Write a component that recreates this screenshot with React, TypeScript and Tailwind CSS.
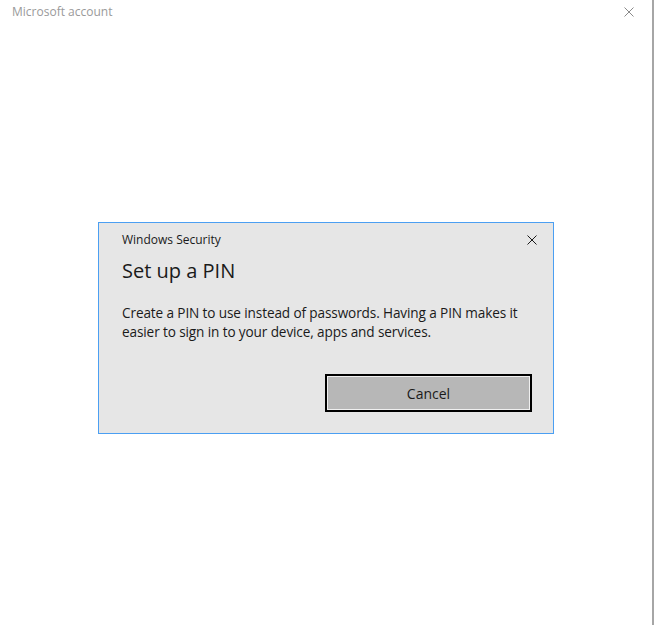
function CloseGlyph({ className }: { className: string }) {
  return (
    <svg viewBox="0 0 10 10" className={className} fill="none" stroke="currentColor" strokeWidth="1">
      <path d="M0.5 0.5 L9.5 9.5 M9.5 0.5 L0.5 9.5" />
    </svg>
  );
}

export default function App() {
  return (
    <div className="w-[654px] h-[625px] bg-white flex flex-col border-r-2 border-[#a6a6a6] font-['Open_Sans',sans-serif]">
      {/* title bar */}
      <div className="flex items-center justify-between h-[24px] pl-[12px] pr-[18px]">
        <span className="text-[12px] leading-[16px] text-[#9a9a9a]">Microsoft account</span>
        <CloseGlyph className="w-[10px] h-[10px] text-[#8a8a8a]" />
      </div>

      {/* body */}
      <div className="flex-1 flex justify-center pt-[198px]">
        <div className="w-[456px] h-[212px] border border-[#4b9ff2] bg-[#e6e6e6] flex flex-col pl-[23px] pr-[21px] pt-[8px]">
          <div className="flex items-center justify-between h-[18px] -mr-[5px]">
            <span className="text-[12px] leading-[16px] text-[#1a1a1a]">Windows Security</span>
            <CloseGlyph className="w-[10px] h-[10px] text-[#1a1a1a]" />
          </div>
          <h1 className="mt-[9px] text-[20px] leading-[26px] text-[#1a1a1a]">Set up a PIN</h1>
          <p className="mt-[19px] text-[13.6px] leading-[19px] tracking-[-0.12px] text-[#1a1a1a] -mr-[6px]">
            Create a PIN to use instead of passwords. Having a PIN makes it easier to sign in to your device, apps and services.
          </p>
          <div className="flex-1 flex justify-end items-end pb-[21px]">
            <button className="w-[207px] h-[38px] border-2 border-black bg-[#b7b7b7] shadow-[inset_0_0_0_1px_#f0f0f0] text-[14px] text-[#1a1a1a]">
              Cancel
            </button>
          </div>
        </div>
      </div>
    </div>
  );
}
